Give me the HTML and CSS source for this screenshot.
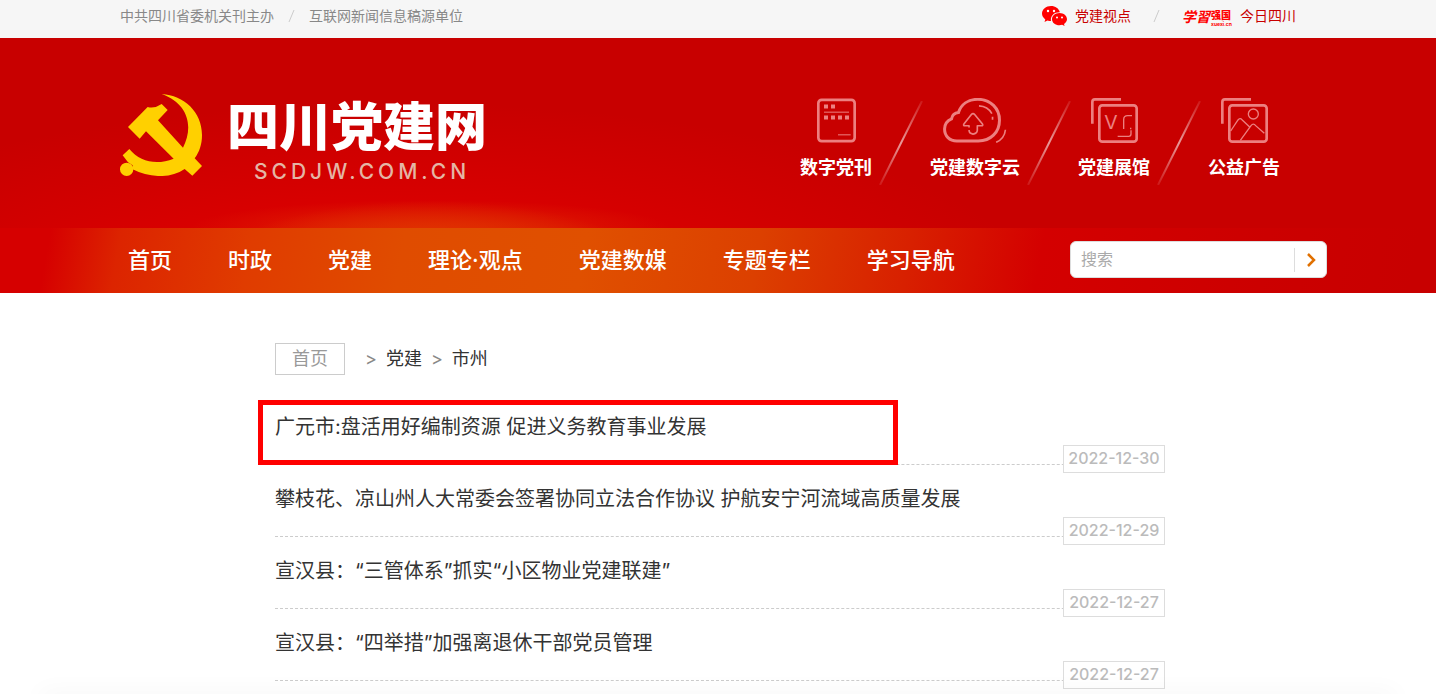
FILE: index.html
```html
<!DOCTYPE html>
<html lang="zh-CN">
<head>
  <meta charset="UTF-8">
  <meta name="viewport" content="width=device-width, initial-scale=1.0">
  <title>四川党建网</title>
  <link rel="stylesheet" href="styles.css">
</head>
<body>

  <!-- Top bar -->
  <div class="topbar">
    <div class="wrap topbar-inner">
      <span>中共四川省委机关刊主办</span>
      <svg class="slash" viewBox="0 0 7 14"><path d="M6 1L1 13" /></svg>
      <span>互联网新闻信息稿源单位</span>
      <div class="topbar-links">
        <a href="#">
          <svg class="wechat" viewBox="0 0 25 20">
            <path fill="#f00" d="M9 0C4 0 0 3.400 0 7.600c0 2.400 1.200 4.300 3.300 5.800L2.500 16l3-1.600c1.200.4 2.300.5 3.500.5C8.100 9.500 12.500 6 17.800 6.200 16.900 2.500 13.300 0 9 0z" />
            <path fill="#f00" d="M17.500 7C13.200 7 10 9.800 10 13.200s3.300 6 7.500 6c.9 0 1.800-.2 2.600-.4l2.500 1.200-.6-2.100c1.800-1.200 3-2.900 3-4.700C25 9.800 21.700 7 17.500 7z" />
            <g fill="#fff">
              <circle cx="6" cy="5" r="1.200" /><circle cx="12" cy="5" r="1.200" />
              <circle cx="15" cy="11.500" r="1" /><circle cx="20" cy="11.500" r="1" />
            </g>
          </svg>
          党建视点
        </a>
        <svg class="slash" viewBox="0 0 7 14"><path d="M6 1L1 13" /></svg>
        <a href="#">
          <svg class="xuexi" viewBox="0 0 50 24">
            <text class="xuexi-brush" x="0" y="18">学習</text>
            <text class="xuexi-bold" x="29" y="15">强国</text>
            <text class="xuexi-small" x="29" y="22">xuexi.cn</text>
          </svg>
          今日四川
        </a>
      </div>
    </div>
  </div>

  <header class="header">
    <div class="wrap banner">
      <a class="logo" href="#">
        <svg class="emblem" viewBox="60 42 246 246">
          <g fill="#ffd000">
            <path d="M185 42C252 46 306 96 306 165C306 193 298 216 284 235L306 258L277 287L254 267C210 297 148 293 98 268L98 256L84 247L68 226L88 207C120 246 170 256 221 236L138 154L119 176L84 141L143 81Q163 87 185 72L203 90L174 121L249 203C282 139 264 70 185 42Z" />
            <circle cx="80" cy="268" r="20" />
          </g>
        </svg>
        <span class="logo-text">
          <strong>四川党建网</strong>
          <span class="domain">SCDJW.COM.CN</span>
        </span>
      </a>

      <div class="hot-links">
        <a href="#">
          <svg class="icon-paper" viewBox="111 54 117 132">
            <rect x="115" y="58" width="109" height="124" rx="10" stroke-width="8" />
            <path stroke-width="3" d="M132 95h75M174 163h38" />
            <path stroke-width="12" d="M132 78h12m9 0h12M132 111h12m9 0h12m9 0h12m9 0h12" />
          </svg>
          数字党刊
        </a>
        <svg class="divider" viewBox="0 0 44 84"><path d="M43 0L1 84" stroke="url(#fade)" /></svg>
        <a href="#">
          <svg class="icon-cloud" viewBox="492 54 192 136">
            <path stroke-width="9" d="M533 184C511 184 496 169 496 148C496 132 505 122 517 117C519 107 527 99 538 98C546 74 567 58 596 58C636 58 662 86 662 121C662 158 635 184 598 184Z" />
            <path stroke-width="5" d="M600 78C618 79 631 87 639 101M641 111v9M680 150C678 168 668 181 652 188" />
            <path stroke-width="5" stroke-linejoin="round" d="M570 143v-5H558Q551 138 555 132L577 104Q582 98 587 104L610 132Q614 138 607 138H595V152Q594 162 582 163Q570 162 570 151" />
          </svg>
          党建数字云
        </a>
        <svg class="divider" viewBox="0 0 44 84"><path d="M43 0L1 84" stroke="url(#fade)" /></svg>
        <a href="#">
          <svg class="icon-stack" viewBox="153 54 141 135">
            <path stroke-width="8" d="M157 131V66Q157 58 165 58H243" />
            <rect x="178" y="76" width="112" height="109" rx="9" stroke-width="8" />
            <text x="193" y="147">V</text>
            <path stroke-width="4" d="M251 147V119Q251 107 263 107H276M272 143v5M273 151V162Q273 169 266 169H233" />
          </svg>
          党建展馆
        </a>
        <svg class="divider" viewBox="0 0 44 84"><path d="M43 0L1 84" stroke="url(#fade)" /></svg>
        <a href="#">
          <svg class="icon-stack" viewBox="543 54 141 135">
            <path stroke-width="8" d="M547 131V66Q547 58 555 58H633" />
            <rect x="568" y="76" width="112" height="109" rx="9" stroke-width="8" />
            <circle cx="640" cy="102" r="15" stroke-width="4" />
            <path stroke-width="4" d="M572 153L594 120Q600 112 606 119L629 141M601 181L633 137Q640 128 647 137L673 160" />
          </svg>
          公益广告
        </a>
      </div>
    </div>

    <nav class="nav">
      <div class="wrap nav-inner">
        <a href="#">首页</a>
        <a href="#">时政</a>
        <a href="#">党建</a>
        <a href="#">理论·观点</a>
        <a href="#">党建数媒</a>
        <a href="#">专题专栏</a>
        <a href="#">学习导航</a>
        <form class="search">
          <input type="text" placeholder="搜索" aria-label="搜索">
          <button type="button" aria-label="提交搜索">
            <svg viewBox="0 0 10 16"><path d="M2 2L8 8L2 14" /></svg>
          </button>
        </form>
      </div>
    </nav>
  </header>

  <main class="content">
    <div class="crumbs">
      <a class="crumb-home" href="#">首页</a>
      <span>&gt;</span>
      <a href="#">党建</a>
      <span>&gt;</span>
      <a href="#">市州</a>
    </div>

    <ul class="news">
      <li class="marked"><a href="#">广元市:盘活用好编制资源 促进义务教育事业发展</a><time>2022-12-30</time></li>
      <li><a href="#">攀枝花、凉山州人大常委会签署协同立法合作协议 护航安宁河流域高质量发展</a><time>2022-12-29</time></li>
      <li><a href="#">宣汉县：“三管体系”抓实“小区物业党建联建”</a><time>2022-12-27</time></li>
      <li><a href="#">宣汉县：“四举措”加强离退休干部党员管理</a><time>2022-12-27</time></li>
    </ul>
  </main>

  <!-- Shared gradient for the banner dividers -->
  <svg class="defs">
    <linearGradient id="fade" gradientUnits="userSpaceOnUse" x1="43" y1="0" x2="1" y2="84">
      <stop offset="0" stop-color="#fff" stop-opacity=".1" />
      <stop offset=".5" stop-color="#fff" stop-opacity=".6" />
      <stop offset="1" stop-color="#fff" stop-opacity=".1" />
    </linearGradient>
  </svg>
</body>
</html>
```
FILE: styles.css
```css
/* Basic page styles */
*, *::before, *::after {
  box-sizing: border-box;
}

body {
  margin: 0;
  background: #fff;
  color: #333;
  font-family: Inter, "Noto Sans CJK SC", sans-serif;
}

/* Soft shade along the bottom of the window */
body::after {
  content: "";
  position: fixed;
  left: 40px;
  right: 40px;
  bottom: -10px;
  height: 10px;
  box-shadow: 0 0 24px rgba(0, 0, 0, 0.06);
  pointer-events: none;
}

a {
  color: inherit;
  text-decoration: none;
}

.wrap {
  max-width: 1204px;
  margin: 0 auto;
  padding-left: 4px;
}

.defs {
  position: absolute;
  width: 0;
  height: 0;
}

/* Top bar */
.topbar {
  height: 38px;
  background: #f6f6f6;
  color: #888;
  font-size: 14px;
  line-height: 32px;
}

.topbar-inner {
  display: flex;
  align-items: center;
  gap: 14px;
  padding-right: 24px;
}

.slash {
  width: 7px;
  height: 14px;
  fill: none;
  stroke: #ccc;
}

.topbar-links {
  display: flex;
  align-items: center;
  gap: 22px;
  margin-left: auto;
  color: #c80000;
}

.topbar-links a {
  display: flex;
  align-items: center;
  gap: 8px;
}

.wechat {
  width: 25px;
  height: 20px;
}

.xuexi {
  width: 50px;
  height: 24px;
  fill: #f00;
}

.xuexi-brush {
  font-size: 14px;
  font-style: italic;
  font-weight: 700;
}

.xuexi-bold {
  font-size: 10px;
  font-weight: 900;
}

.xuexi-small {
  font-size: 5px;
  font-weight: 700;
}

/* Header */
.header {
  background:
    radial-gradient(250px 92px at 430px 100%, rgba(224, 76, 0, 0.9) 40%, rgba(224, 40, 0, 0) 100%),
    radial-gradient(640px 190px at 400px 100%, #dc0000 35%, rgba(216, 0, 0, 0) 100%),
    #c80000;
  color: #fff;
}

.banner {
  display: flex;
  justify-content: space-between;
  height: 190px;
  padding-right: 40px;
  background: radial-gradient(240px 28px at 314px 100%, rgba(224, 50, 0, 0.8), rgba(224, 30, 0, 0));
}

.logo {
  display: flex;
  align-items: flex-start;
  gap: 25px;
  padding-top: 56px;
}

.emblem {
  width: 82px;
  height: 82px;
}

.logo-text {
  display: flex;
  flex-direction: column;
  align-items: center;
  padding-top: 8px;
}

.logo-text strong {
  font-size: 52px;
  font-weight: 900;
  line-height: 52px;
}

.domain {
  padding-left: 10px;
  color: #e4b5a5;
  font-size: 21px;
  font-weight: 500;
  line-height: 36px;
  letter-spacing: 4px;
}

.hot-links {
  display: flex;
  align-items: flex-start;
  gap: 7px;
  padding-top: 60px;
}

.hot-links a {
  display: flex;
  flex-direction: column;
  align-items: center;
  gap: 13px;
  font-size: 18px;
  font-weight: 700;
  line-height: 24px;
}

.hot-links svg {
  height: 45px;
  fill: none;
  stroke: #ec8080;
}

.hot-links text {
  fill: #ec8080;
  stroke: none;
  font-size: 58px;
  font-weight: 400;
}

.icon-paper {
  width: 39px;
}

.icon-cloud {
  width: 64px;
}

.icon-stack {
  width: 47px;
}

.hot-links .divider {
  width: 44px;
  height: 84px;
  margin-top: 3px;
  stroke-width: 2;
}

/* Navigation */
.nav {
  background: linear-gradient(100deg, #d60000 50px, #dc2400 120px, #e03c00 250px, #e04c00 400px, #e05000 580px, #dc4000 750px, #d82000 900px, #d40000 1030px, #cc0000 1250px, #c80000 1400px);
}

.nav-inner {
  display: flex;
  align-items: center;
  gap: 56px;
  height: 65px;
  padding-left: 12px;
  padding-bottom: 2px;
  font-size: 22px;
  font-weight: 500;
  line-height: 32px;
  white-space: nowrap;
}

.search {
  display: flex;
  align-items: center;
  width: 257px;
  height: 37px;
  margin: 0 -7px 0 auto;
  background: #fff;
  border: 1px solid #ddd;
  border-radius: 6px;
}

.search input {
  flex: 1;
  min-width: 0;
  padding: 0 10px 2px;
  border: 0;
  outline: 0;
  background: none;
  font: 16px Inter, "Noto Sans CJK SC", sans-serif;
}

.search input::placeholder {
  color: #aaa;
}

.search button {
  width: 32px;
  height: 24px;
  padding: 0;
  border: 0;
  border-left: 1px solid #ddd;
  background: none;
  cursor: pointer;
}

.search svg {
  display: block;
  width: 10px;
  height: 16px;
  margin: 0 auto;
  fill: none;
  stroke: #e07000;
  stroke-width: 2.500;
}

/* Content */
.content {
  max-width: 894px;
  margin: 0 auto;
  padding: 50px 0 10px 4px;
}

.crumbs {
  display: flex;
  align-items: center;
  gap: 9px;
  font-size: 18px;
  line-height: 30px;
}

.crumbs span {
  color: #888;
}

.crumb-home {
  margin-right: 11px;
  padding: 0 16px;
  border: 1px solid #ccc;
  color: #999;
}

.news {
  margin: 18px 0 0;
  padding: 0;
  list-style: none;
}

.news li {
  position: relative;
  height: 72px;
  border-bottom: 1px dashed #ccc;
  font-size: 20px;
  line-height: 68px;
}

.news time {
  position: absolute;
  right: 0;
  bottom: -9px;
  width: 102px;
  height: 28px;
  border: 1px solid #ddd;
  background: #fff;
  color: #bbb;
  font-size: 16px;
  font-weight: 500;
  line-height: 25px;
  text-align: center;
}

/* Red frame round the marked headline */
.marked::before {
  content: "";
  position: absolute;
  left: -17px;
  top: 7px;
  width: 640px;
  height: 65px;
  border: 5px solid #f00;
}
```
